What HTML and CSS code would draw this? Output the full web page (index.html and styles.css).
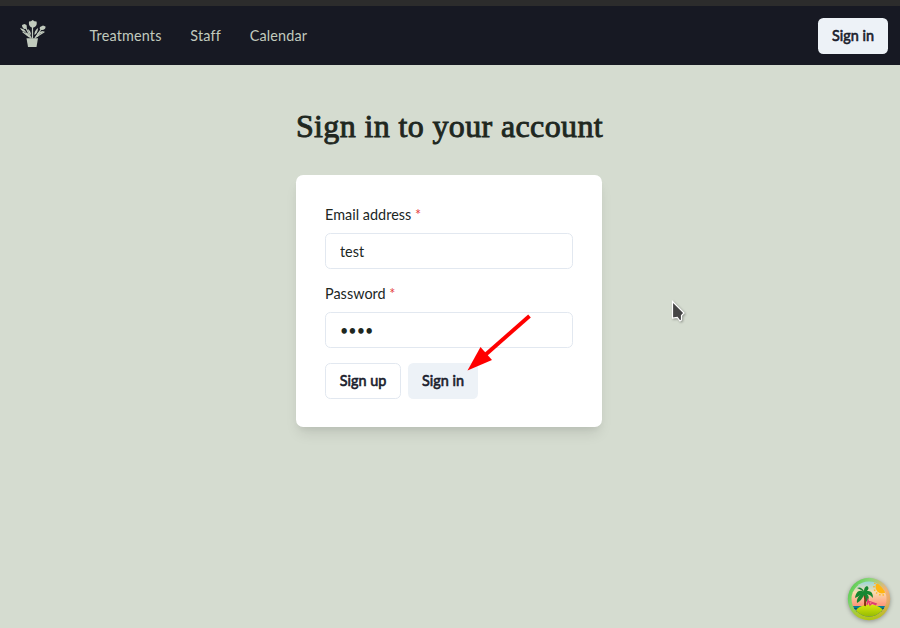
FILE: index.html
```html
<!DOCTYPE html>
<html lang="en">
<head>
<meta charset="utf-8">
<title>Sign in</title>
<link rel="stylesheet" href="styles.css">
</head>
<body>
<header class="navbar">
  <svg class="logo" viewBox="0 0 27 28" aria-label="Flower pot">
    <g fill="none" stroke="currentColor" stroke-width="1.2" stroke-linecap="round">
      <path d="M12.500 18V6M11 18L5 6M15 18L22 8M9.500 17L3 12M16 17L24 12"/>
    </g>
    <path d="M9 1.500L11 1.200L12.700 0L14.400 1.200L16.500 1.500C17.500 5 15.500 7.500 12.700 7.500S8.500 5 9 1.500ZM2 5L4.500 4L6.500 5C7.500 8 6 9.500 4.500 9S2 7 2 5ZM20 7L23 5.500L25.500 6.500C26 9 23.500 10.500 21.500 10S19.500 8.500 20 7Z"/>
    <path d="M0 8Q5 9 6 12Q2 12 0 8ZM5 12Q9 13 10 17Q6 16 5 12ZM8 9Q11 11 11 15Q8 13 8 9ZM18 8Q18 13 14.500 15Q14 11 18 8ZM24 11Q21 15 17 14Q19 11 24 11ZM19 14Q19 17 15.500 17.500Q15.500 15 19 14Z"/>
    <path d="M6.500 18.300H18L16.500 27H8Z"/>
  </svg>
  <nav class="links">
    <a class="link">Treatments</a>
    <a class="link">Staff</a>
    <a class="link">Calendar</a>
  </nav>
  <button class="button button-solid" type="button">Sign in</button>
</header>
<main class="page">
  <h1 class="title">Sign in to your account</h1>
  <form class="card">
    <label class="label" for="email">Email address <span class="required">*</span></label>
    <input class="input" id="email" type="text" value="test">
    <label class="label" for="password">Password <span class="required">*</span></label>
    <input class="input" id="password" type="password" value="pass">
    <div class="actions">
      <button class="button button-outline" type="button">Sign up</button>
      <button class="button button-solid" type="button">Sign in</button>
    </div>
  </form>
</main>
<svg class="arrow" viewBox="0 0 64 58">
  <path d="M62.500 2L17 42" stroke="#f00" stroke-width="4" fill="none"/>
  <path d="M.5 56.500L13.500 33L25 46Z" fill="#f00"/>
</svg>
<svg class="pointer" viewBox="0 0 16 24">
  <path d="M1.500 1.500V18L6.300 17.500L9 21L10.500 20V15.500L13 13Z" fill="#454545" stroke="#fff" stroke-width="1.200"/>
</svg>
<svg class="island" viewBox="0 0 44 44">
  <defs>
    <linearGradient id="ring" x1="0" y1="0" x2="1" y2=".6"><stop offset="0" stop-color="#45c83c"/><stop offset=".4" stop-color="#8bd67a"/><stop offset=".8" stop-color="#f3b27c"/><stop offset="1" stop-color="#e0a860"/></linearGradient>
    <linearGradient id="ring-base" x1="0" y1="0" x2="0" y2="1"><stop offset=".6" stop-color="#a8c90c" stop-opacity="0"/><stop offset="1" stop-color="#a8c90c"/></linearGradient>
    <linearGradient id="sky" x1="0" y1="0" x2="0" y2="1"><stop offset="0" stop-color="#72d4ec"/><stop offset=".35" stop-color="#f9dcae"/><stop offset=".7" stop-color="#ff8c72"/></linearGradient>
    <linearGradient id="sand" x1="0" y1="0" x2="0" y2="1"><stop offset="0" stop-color="#d9e90b"/><stop offset="1" stop-color="#79a800"/></linearGradient>
    <clipPath id="scene"><circle cx="22" cy="22" r="17.500"/></clipPath>
  </defs>
  <circle cx="22" cy="22" r="21.200" fill="url(#ring)"/>
  <circle cx="22" cy="22" r="21.200" fill="url(#ring-base)"/>
  <g clip-path="url(#scene)">
    <path d="M0 0H44V44H0Z" fill="url(#sky)"/>
    <path d="M0 29H44V44H0Z" fill="#087d91"/>
    <path d="M0 31.500H44M0 34.500H44" stroke="#075568"/>
    <ellipse cx="22.500" cy="36" rx="14" ry="8.500" fill="url(#sand)"/>
    <path d="M18 29Q19 22 17 16" stroke="#833711" stroke-width="2" fill="none"/>
    <path d="M17 15C12 12 9 15 8 21Q11 20 13 18Q9 22 10 26Q15 23 17 18Q19 20 19 25Q24 21 20 17Q24 18 26 21Q26 13 20 14Q23 11 20 9Q17 10 17 14Q14 9 10 11Q13 12 17 15Z" fill="#168731"/>
    <path d="M20 28L21 23L23 28L25 26L29 28M21 24L30 27" stroke="#df3f72" stroke-width="1.300" fill="none"/>
    <circle cx="35" cy="10" r="8" fill="none" stroke="#ffb52c" stroke-width="1.600" stroke-dasharray="1.500 2"/>
    <circle cx="35" cy="10" r="6.500" fill="#ffb512"/>
  </g>
</svg>
</body>
</html>
```
FILE: styles.css
```css
* { box-sizing: border-box; }
body {
  margin: 0;
  min-height: 628px;
  background: #d5dcd0;
  color: #20271f;
  font: 14.4px/21.6px Lato, "Liberation Sans", sans-serif;
}
.navbar {
  display: flex;
  align-items: center;
  height: 65px;
  padding: 6px 12px 0 20px;
  background: linear-gradient(#2c2c2c 6px, #171923 6px);
}
.logo { width: 27px; height: 28px; margin-top: -3px; fill: currentColor; color: #c1cabd; }
.links { display: flex; flex: 1; gap: 28.800px; margin-left: 42.500px; color: #c1cabd; letter-spacing: .16px; }
.button {
  height: 36px;
  padding: 0;
  border: 0;
  border-radius: 5.400px;
  font: 14.4px/21.6px Lato, sans-serif;
  white-space: nowrap;
  color: #1a202c;
  -webkit-text-stroke: .6px #1a202c;
}
.button-solid { width: 70px; background: #edf2f7; }
.button-outline { width: 76px; background: #fff; border: 1px solid #e2e8f0; }
.page { display: flex; flex-direction: column; align-items: center; padding-top: 40px; }
.title {
  margin: 0 1px 27px 0;
  height: 43px;
  font: 32px/43px "Liberation Serif", serif;
  letter-spacing: .37px;
  white-space: nowrap;
  -webkit-text-stroke: .9px #20271f;
}
.card {
  display: flex;
  flex-direction: column;
  width: 306px;
  height: 252px;
  margin-right: 2px;
  padding: 29px 29px 28px;
  border-radius: 7.200px;
  background: #fff;
  box-shadow: 0 9px 14px -3px #0000001a, 0 4px 6px -2px #0000000d;
}
.label { flex: none; height: 22px; margin-bottom: 7px; letter-spacing: .03px; }
.required { color: #e53e3e; }
.input {
  flex: none;
  width: 248px;
  height: 36px;
  margin: 0 0 14px;
  padding: 1px 14px 0;
  border: 1px solid #e2e8f0;
  border-radius: 5.400px;
  background: #fff;
  color: #20271f;
  font: 14.4px/21.6px Lato, sans-serif;
}
.actions { display: flex; gap: 7px; margin-top: 1px; }
.arrow { position: absolute; left: 467px; top: 314px; width: 64px; height: 58px; }
.pointer { position: absolute; left: 671px; top: 300px; width: 16px; height: 24px; filter: drop-shadow(1px 1px 1px #0005); }
.island { position: absolute; left: 847px; top: 577px; width: 44px; height: 44px; filter: drop-shadow(0 1px 2px #0005); }
```
